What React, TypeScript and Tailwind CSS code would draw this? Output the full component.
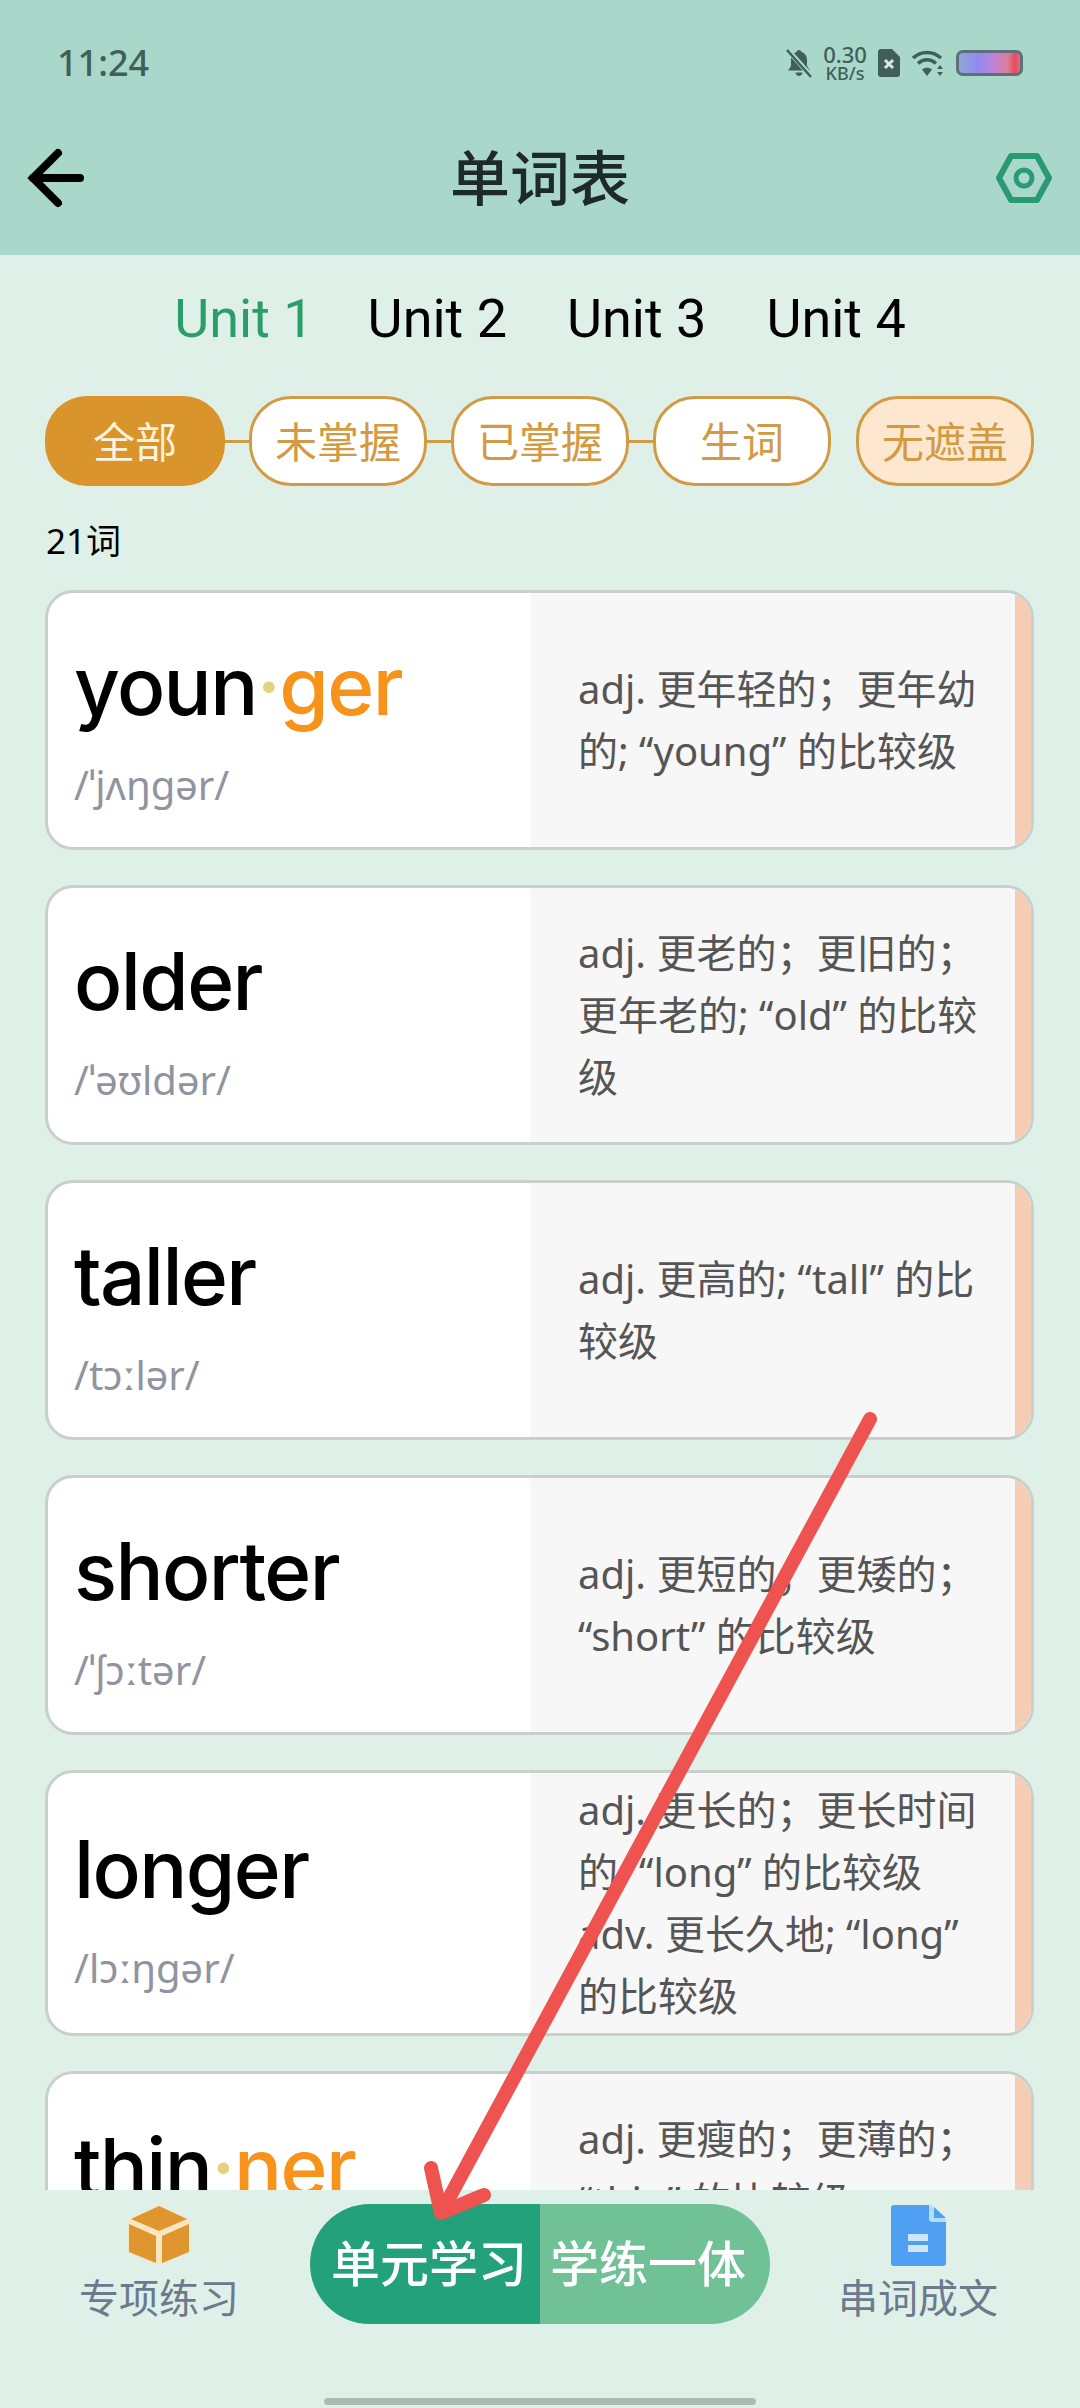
import React from 'react';

interface Word {
  word: string;
  tail?: string;
  phonetic: string;
  lines: string[];
}

const words: Word[] = [
  { word: 'youn', tail: 'ger', phonetic: "/ˈjʌŋgər/", lines: ['adj. 更年轻的；更年幼', '的; “young” 的比较级'] },
  { word: 'older', phonetic: "/ˈəʊldər/", lines: ['adj. 更老的；更旧的；', '更年老的; “old” 的比较', '级'] },
  { word: 'taller', phonetic: '/tɔːlər/', lines: ['adj. 更高的; “tall” 的比', '较级'] },
  { word: 'shorter', phonetic: "/ˈʃɔːtər/", lines: ['adj. 更短的；更矮的；', '“short” 的比较级'] },
  { word: 'longer', phonetic: '/lɔːŋgər/', lines: ['adj. 更长的；更长时间', '的; “long” 的比较级', 'adv. 更长久地; “long”', '的比较级'] },
  { word: 'thin', tail: 'ner', phonetic: '/θɪnər/', lines: ['adj. 更瘦的；更薄的；', '“thin” 的比较级', ''] },
];

const filters = ['未掌握', '已掌握', '生词'];

const WordCard: React.FC<{ item: Word }> = ({ item }) => (
  <div className="flex min-h-[260px] shrink-0 overflow-hidden rounded-[28px] border-[3px] border-[#c9d0cc] bg-white">
    <div className="flex w-[482px] shrink-0 flex-col justify-center pl-[26px] pt-[8px]">
      <div className="text-[80px] font-medium leading-[100px] tracking-[-0.02em] text-black [font-family:Inter,'Noto_Sans',sans-serif]">
        {item.word}
        {item.tail && (
          <>
            <span className="text-[#e5d27c]">·</span>
            <span className="text-[#f7931a]">{item.tail}</span>
          </>
        )}
      </div>
      <div className="mt-[21px] text-[40px] leading-[56px] text-[#9094a0]">{item.phonetic}</div>
    </div>
    <div className="flex flex-1 flex-col justify-center bg-[#f7f7f7] py-[6px] pl-[48px] text-[40px] leading-[62px] text-[#555555]">
      {item.lines.map((line, index) => (
        <div key={index} className="h-[62px] whitespace-nowrap">{line}</div>
      ))}
    </div>
    <div className="w-[16px] shrink-0 bg-[#f5cdb5]" />
  </div>
);

const StatusIcons = () => (
  <div className="flex items-center">
    {/* muted bell */}
    <svg width="26" height="30" viewBox="0 0 26 30">
      <path d="M13 2c1.400 0 2.200.9 2.400 2 3.600 1 5.600 4 5.600 8v6l3 4.500H2l3-4.500v-6c0-4 2-7 5.600-8 .2-1.100 1-2 2.400-2z" fill="#3f5f58" />
      <path d="M9.500 24.500h7c-.3 2-1.700 3.500-3.500 3.500s-3.200-1.500-3.500-3.500z" fill="#3f5f58" />
      <path d="M1 1l24 27" stroke="#a9d7c9" strokeWidth="5" />
      <path d="M1 2l24 27" stroke="#3f5f58" strokeWidth="2.500" />
    </svg>
    <div className="ml-[9px] flex w-[48px] flex-col items-center text-[#3f5f58]">
      <span className="text-[22px] font-medium leading-[21px]">0.30</span>
      <span className="text-[18px] font-medium leading-[17px]">KB/s</span>
    </div>
    {/* sim */}
    <svg width="24" height="30" viewBox="0 0 24 30" className="ml-[8px]">
      <path d="M4 1h11l8 8v17a3 3 0 0 1-3 3H4a3 3 0 0 1-3-3V4a3 3 0 0 1 3-3z" fill="#3f5f58" />
      <path d="M8 12l8 8M16 12l-8 8" stroke="#dce9e3" strokeWidth="3" />
    </svg>
    {/* wifi */}
    <svg width="34" height="28" viewBox="0 0 34 28" fill="none" className="ml-[10px]">
      <path d="M2 9c8-7.500 20-7.500 28 0" stroke="#3f5f58" strokeWidth="3.500" />
      <path d="M7 14.500c5.500-5 12.500-5 18 0" stroke="#3f5f58" strokeWidth="3.500" />
      <path d="M16 27l-5-6.500c3-2.400 7-2.400 10 0z" fill="#3f5f58" />
      <path d="M29 16l3 4h-6zM29 27l-3-4h6z" fill="#3f5f58" />
    </svg>
    {/* battery */}
    <div className="ml-[11px] h-[26px] w-[67px] rounded-[7px] border-[3px] border-[#5d6f7a] bg-[linear-gradient(90deg,#8fa5d8_0%,#8f8aee_32%,#c282d8_58%,#dd7f98_80%,#e84a5a_92%,#d9707c_100%)]" />
  </div>
);

const RedArrow = () => (
  <svg className="pointer-events-none absolute left-0 top-0" width="1080" height="2408" fill="none">
    <path d="M870 1419L441 2213" stroke="#ef5350" strokeWidth="14" strokeLinecap="round" />
    <path d="M431 2168L441 2213L484 2195" stroke="#ef5350" strokeWidth="14" strokeLinecap="round" strokeLinejoin="round" />
  </svg>
);

export default function App() {
  return (
    <div className="relative flex h-[2408px] w-[1080px] flex-col overflow-hidden bg-[#dff0e9] [font-family:'Noto_Sans','Noto_Sans_CJK_SC',sans-serif]">
      {/* Header */}
      <header className="h-[255px] shrink-0 bg-[#a9d7c9]">
        <div className="flex h-[126px] items-center justify-between pl-[57px] pr-[57px]">
          <span className="text-[36px] font-medium text-[#3f5f58]">11:24</span>
          <StatusIcons />
        </div>
        <div className="flex h-[104px] items-center">
          <div className="w-[120px] pl-[26px]">
            <svg width="62" height="62" viewBox="0 0 62 62" fill="none">
              <path d="M54 31H7" stroke="#000" strokeWidth="8" strokeLinecap="round" />
              <path d="M32 6L7 31L32 56" stroke="#000" strokeWidth="8" strokeLinecap="round" strokeLinejoin="miter" />
            </svg>
          </div>
          <h1 className="flex-1 text-center text-[60px] font-medium text-[#1e2a27]">单词表</h1>
          <div className="flex w-[120px] justify-end pr-[28px]">
            <svg width="56" height="50" viewBox="0 0 56 50" fill="none">
              <path d="M15 3H41L53 25L41 47H15L3 25Z" stroke="#2a9a75" strokeWidth="6" strokeLinejoin="round" />
              <circle cx="28" cy="25" r="8" stroke="#2a9a75" strokeWidth="5" />
            </svg>
          </div>
        </div>
      </header>

      {/* Units */}
      <nav className="mt-[28px] flex justify-center gap-[60px] text-[54px] leading-[72px] text-black [font-family:Roboto,sans-serif]">
        <span className="-mr-[6px] text-[#2a9d68]">Unit 1</span>
        <span>Unit 2</span>
        <span>Unit 3</span>
        <span>Unit 4</span>
      </nav>

      {/* Filters */}
      <div className="mt-[41px] flex items-center pl-[45px] text-[42px] text-[#d39a44]">
        <div className="flex h-[90px] w-[180px] items-center justify-center rounded-[42px] bg-[#d9942c] text-[#fdf3df]">全部</div>
        {filters.map((label) => (
          <React.Fragment key={label}>
            <div className="h-[3px] w-[24px] bg-[#d39a44]" />
            <div className="flex h-[90px] w-[178px] items-center justify-center rounded-[42px] border-[3px] border-[#d39a44] bg-white">{label}</div>
          </React.Fragment>
        ))}
        <div className="ml-[25px] flex h-[90px] w-[178px] items-center justify-center rounded-[42px] border-[3px] border-[#d39a44] bg-[#fde8cf]">无遮盖</div>
      </div>

      <div className="mt-[30px] pl-[46px] text-[35px] leading-[50px] text-black">21词</div>

      {/* Word list */}
      <div className="mt-[24px] flex min-h-0 flex-1 flex-col gap-[35px] overflow-hidden pl-[45px] pr-[46px]">
        {words.map((item) => (
          <WordCard key={item.word} item={item} />
        ))}
      </div>

      {/* Bottom bar */}
      <footer className="relative h-[218px] shrink-0 bg-[#dff0e9]">
        <div className="flex items-start pt-[15px]">
          <div className="flex w-[310px] flex-col items-center pl-[8px]">
            <svg width="62" height="60" viewBox="0 0 62 60">
              <path d="M31 0L62 15V47L31 60L0 47V15z" fill="#fbe6c0" />
              <path d="M31 1L59 14L31 26L3 14z" fill="#e0962e" />
              <path d="M1 19L28 31V58L1 47z" fill="#e0962e" />
              <path d="M61 19L34 31V58L61 47z" fill="#e0962e" />
            </svg>
            <span className="mt-[8px] text-[40px] leading-[50px] text-[#6b7a8c]">专项练习</span>
          </div>
          <div className="-mt-[1px] flex h-[120px] w-[460px] overflow-hidden rounded-[60px] text-[49px] font-medium text-white">
            <div className="flex w-[230px] items-center justify-center bg-[#22a17a] pl-[8px]">单元学习</div>
            <div className="flex w-[230px] items-center justify-center bg-[#70c195] pr-[14px]">学练一体</div>
          </div>
          <div className="flex flex-1 flex-col items-center pr-[14px]">
            <svg width="55" height="61" viewBox="0 0 55 61">
              <path d="M3 0H38V13a4 4 0 0 0 4 4H55V58a3 3 0 0 1-3 3H3a3 3 0 0 1-3-3V3a3 3 0 0 1 3-3z" fill="#4f9ff2" />
              <path d="M38 0H40L55 15V17H42a4 4 0 0 1-4-4z" fill="#b5dcfb" />
              <path d="M43 2L55 13H43z" fill="#4f9ff2" />
              <path d="M17 29H37V36H17zM17 40H37V47H17z" fill="#cfe6fb" />
            </svg>
            <span className="mt-[7px] text-[40px] leading-[50px] text-[#6b7a8c]">串词成文</span>
          </div>
        </div>
        <div className="absolute bottom-[3px] left-[324px] h-[7px] w-[432px] rounded-full bg-[#a9bcb4]" />
      </footer>

      <RedArrow />
    </div>
  );
}
